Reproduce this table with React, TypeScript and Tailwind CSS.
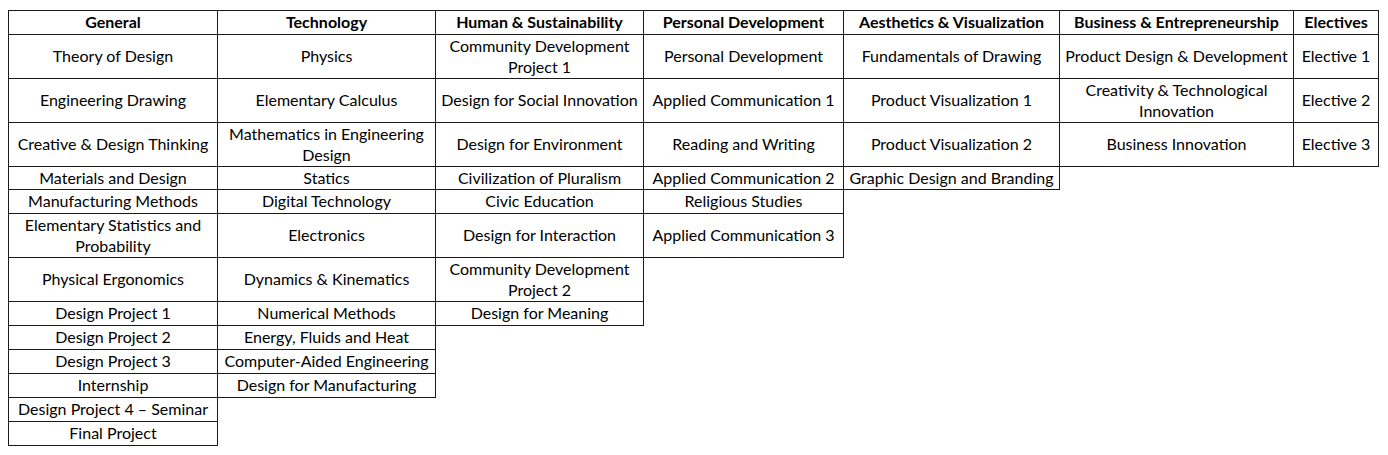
import React from "react";

const headers = [
  "General",
  "Technology",
  "Human & Sustainability",
  "Personal Development",
  "Aesthetics & Visualization",
  "Business & Entrepreneurship",
  "Electives",
];

const columns: string[][] = [
  [
    "Theory of Design",
    "Engineering Drawing",
    "Creative & Design Thinking",
    "Materials and Design",
    "Manufacturing Methods",
    "Elementary Statistics and\nProbability",
    "Physical Ergonomics",
    "Design Project 1",
    "Design Project 2",
    "Design Project 3",
    "Internship",
    "Design Project 4 – Seminar",
    "Final Project",
  ],
  [
    "Physics",
    "Elementary Calculus",
    "Mathematics in Engineering\nDesign",
    "Statics",
    "Digital Technology",
    "Electronics",
    "Dynamics & Kinematics",
    "Numerical Methods",
    "Energy, Fluids and Heat",
    "Computer-Aided Engineering",
    "Design for Manufacturing",
  ],
  [
    "Community Development\nProject 1",
    "Design for Social Innovation",
    "Design for Environment",
    "Civilization of Pluralism",
    "Civic Education",
    "Design for Interaction",
    "Community Development\nProject 2",
    "Design for Meaning",
  ],
  [
    "Personal Development",
    "Applied Communication 1",
    "Reading and Writing",
    "Applied Communication 2",
    "Religious Studies",
    "Applied Communication 3",
  ],
  [
    "Fundamentals of Drawing",
    "Product Visualization 1",
    "Product Visualization 2",
    "Graphic Design and Branding",
  ],
  ["Product Design & Development", "Creativity & Technological\nInnovation", "Business Innovation"],
  ["Elective 1", "Elective 2", "Elective 3"],
];

const rowCount = 13;

export default function App() {
  return (
    <div className="min-h-[455px] bg-white pl-[8px] pt-[10px] text-[16px] text-black [font-family:Lato,'Noto_Sans',sans-serif]">
      <div className="grid grid-cols-[210px_218px_208px_200px_216px_234px_85px] grid-rows-[25px_44px_44px_44px_23px_24px_44px_44px_24px_24px_24px_24px_24px_24px] w-fit">
        {headers.map((h, c) => (
          <div
            key={h}
            className={`flex items-center justify-center border-t border-r border-b border-[#1a1a1a] pb-[2px] font-bold whitespace-nowrap leading-none ${c === 0 ? "border-l" : ""}`}
          >
            {h}
          </div>
        ))}
        {Array.from({ length: rowCount }).map((_, r) =>
          columns.map((col, c) => {
            const text = col[r];
            if (!text) return <div key={`${r}-${c}`} />;
            return (
              <div
                key={`${r}-${c}`}
                className={`flex items-center justify-center border-r border-b border-[#1a1a1a] pb-[2px] text-center whitespace-pre-line leading-[21px] ${c === 0 ? "border-l" : ""}`}
              >
                {text}
              </div>
            );
          })
        )}
      </div>
    </div>
  );
}
